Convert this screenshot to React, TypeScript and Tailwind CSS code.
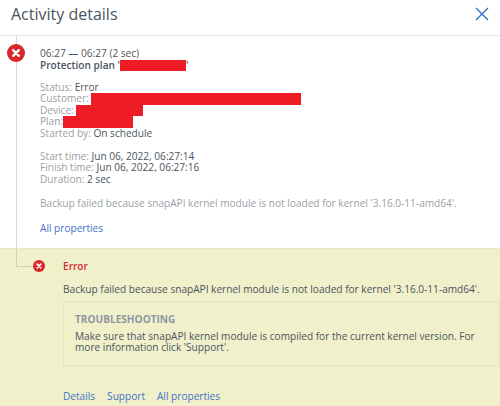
const Redacted = ({ width }: { width: string }) => (
  <span className={`inline-block h-[11.5px] ${width} bg-[#ee1c25] align-top`} />
);

function ErrorIcon({ size }: { size: number }) {
  return (
    <svg width={size} height={size} viewBox="0 0 18 18" className="block">
      <circle cx="9" cy="9" r="9" fill="#d9262c" />
      <path d="M6.2 6.2 11.8 11.8M11.8 6.2 6.2 11.8" stroke="#fff" strokeWidth="2.4" strokeLinecap="round" />
    </svg>
  );
}

function Prop({ label, children }: { label: string; children: React.ReactNode }) {
  return (
    <div className="whitespace-nowrap">
      <span className="text-[#9a9fa6]">{label}:</span> {children}
    </div>
  );
}

export default function App() {
  return (
    <div className="h-[406px] w-[500px] overflow-hidden bg-white text-[10.1px] leading-[11.5px] text-[#4c5560] [font-family:'Open_Sans',sans-serif]">
      {/* header */}
      <div className="flex h-[36px] items-start justify-between border-b border-[#e6e8ec] pl-[11px] pr-[11px]">
        <h1 className="text-[16px] leading-[28px] text-[#4a5560]">Activity details</h1>
        <svg width="14" height="14" viewBox="0 0 14 14" className="mt-[7px]">
          <path d="M1 1 13 13M13 1 1 13" stroke="#2f6fc9" strokeWidth="1.4" fill="none" />
        </svg>
      </div>

      {/* activity */}
      <div className="relative h-[212px] pl-[40px] pt-[12px]">
        <div className="absolute left-[16px] top-0 h-[230px] w-px bg-[#cfd9e6]" />
        <div className="absolute left-[7px] top-[8px]">
          <ErrorIcon size={18} />
        </div>
        <div>06:27 — 06:27 (2 sec)</div>
        <div className="font-semibold">
          Protection plan '<Redacted width="w-[66px]" />'
        </div>

        <div className="mt-[10.5px]">
          <Prop label="Status">Error</Prop>
          <Prop label="Customer">
            <Redacted width="w-[210px]" />
          </Prop>
          <Prop label="Device">
            <Redacted width="w-[67px]" />
          </Prop>
          <Prop label="Plan">
            <span className="-ml-[3px] inline-block align-top">
              <Redacted width="w-[70px]" />
            </span>
          </Prop>
          <Prop label="Started by">On schedule</Prop>
        </div>

        <div className="mt-[11.5px]">
          <Prop label="Start time">Jun 06, 2022, 06:27:14</Prop>
          <Prop label="Finish time">Jun 06, 2022, 06:27:16</Prop>
          <Prop label="Duration">2 sec</Prop>
        </div>

        <p className="mt-[12.5px] whitespace-nowrap text-[#9a9fa6]">
          Backup failed because snapAPI kernel module is not loaded for kernel '3.16.0-11-amd64'.
        </p>
        <a className="mt-[14px] block text-[#3f74c6]">All properties</a>
      </div>

      {/* error details */}
      <div className="relative h-[158px] border-t border-[#e5e5c8] bg-[#f0f0cb] pl-[63px] pt-[12px]">
        <div className="absolute left-[16px] top-0 h-[18px] w-[18px] border-b border-l border-[#cfd0b8]" />
        <div className="absolute left-[33px] top-[11px]">
          <ErrorIcon size={12} />
        </div>
        <div className="font-semibold text-[#d9262c]">Error</div>
        <p className="mt-[11.5px] whitespace-nowrap">
          Backup failed because snapAPI kernel module is not loaded for kernel '3.16.0-11-amd64'.
        </p>
        <div className="mt-[5px] h-[65px] border border-[#e4e4c2] pl-[11px] pt-[12px]">
          <div className="font-bold text-[#8f96a0]">TROUBLESHOOTING</div>
          <p className="mt-[5.5px] w-[415px]">
            Make sure that snapAPI kernel module is compiled for the current kernel version. For more information click 'Support'.
          </p>
        </div>
        <div className="mt-[25px] flex gap-[12px] text-[#3f74c6]">
          <a>Details</a>
          <a>Support</a>
          <a>All properties</a>
        </div>
      </div>
    </div>
  );
}
